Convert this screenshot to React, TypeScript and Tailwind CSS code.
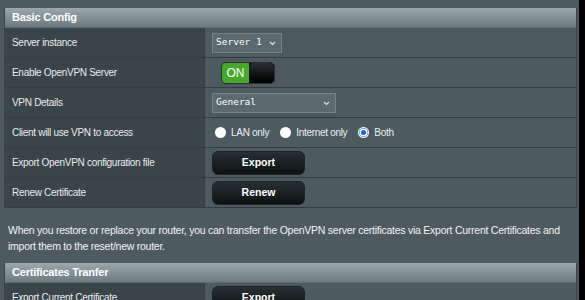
import React from "react";

const font = { fontFamily: '"Liberation Sans", Arial, sans-serif' };

function Row({ label, children }: { label: string; children?: React.ReactNode }) {
  return (
    <div className="flex h-[30px] border-b border-[#343e42]">
      <div className="w-[200px] shrink-0 bg-[#3a4549] flex items-center pl-[7px] text-[10px] tracking-[-0.3px] text-[#e8ecee] border-r border-[#343e42] whitespace-nowrap">
        {label}
      </div>
      <div className="flex-1 bg-[#4d5a60] flex items-center pl-[7px]">{children}</div>
    </div>
  );
}

function Header({ title }: { title: string }) {
  return (
    <div className="h-[20px] flex items-center pl-[7px] text-[11px] tracking-[-0.2px] font-bold text-white bg-gradient-to-b from-[#9aa8ad] to-[#6c7b81] border-b border-[#5f6d73]">
      {title}
    </div>
  );
}

function Select({ text, w }: { text: string; w: string }) {
  return (
    <div
      className={`${w} h-[20px] bg-[#5a6a70] border border-[#74838a] flex items-center justify-between pl-[3px] pr-[5px] text-white whitespace-nowrap`}
    >
      <span style={{ fontFamily: '"DejaVu Sans Mono", "Liberation Mono", monospace' }} className="text-[9.5px]">
        {text}
      </span>
      <svg width="7" height="5" viewBox="0 0 7 5" className="mt-[1px]">
        <path d="M1 1 L3.5 3.5 L6 1" stroke="#e6e6e6" strokeWidth="1.1" fill="none" />
      </svg>
    </div>
  );
}

function Btn({ text }: { text: string }) {
  return (
    <div className="w-[93px] h-[24px] rounded-[6px] bg-gradient-to-b from-[#283034] to-[#0e1213] border border-[#1c2326] flex items-center justify-center text-[10.5px] font-bold text-white">
      {text}
    </div>
  );
}

function Radio({ checked, label }: { checked?: boolean; label: string }) {
  return (
    <div className="flex items-center gap-[5px] mr-[11px]">
      {checked ? (
        <div className="w-[11px] h-[11px] rounded-full bg-white flex items-center justify-center">
          <div className="w-[9px] h-[9px] rounded-full bg-[#1565e0] flex items-center justify-center">
            <div className="w-[5px] h-[5px] rounded-full bg-[#1565e0] ring-[1.5px] ring-white" />
          </div>
        </div>
      ) : (
        <div className="w-[11px] h-[11px] rounded-full bg-white" />
      )}
      <span className="text-[10px] tracking-[-0.3px] text-[#e8ecee]">{label}</span>
    </div>
  );
}

export default function App() {
  return (
    <div className="w-[585px] h-[300px] overflow-hidden flex" style={font}>
      <div className="w-[579px] h-full bg-[#4d5b61] pt-[8px] pl-[4px] pr-[2px]">
        <div className="border-l border-r border-[#3a4449]">
          <Header title="Basic Config" />
          <Row label="Server instance">
            <Select text="Server 1" w="w-[70px]" />
          </Row>
          <Row label="Enable OpenVPN Server">
            <div className="ml-[9px] w-[54px] h-[22px] rounded-[5px] flex overflow-hidden bg-[#0a0c0d] border border-[#2a3034]">
              <div className="w-[27px] h-full bg-[#47a82b] flex items-center justify-center text-[12px] text-white">
                ON
              </div>
              <div className="flex-1 h-full rounded-[5px] bg-gradient-to-b from-[#2a2f31] to-[#020303]" />
            </div>
          </Row>
          <Row label="VPN Details">
            <Select text="General" w="w-[124px]" />
          </Row>
          <Row label="Client will use VPN to access">
            <div className="flex items-center ml-[3px]">
              <Radio label="LAN only" />
              <Radio label="Internet only" />
              <Radio checked label="Both" />
            </div>
          </Row>
          <Row label="Export OpenVPN configuration file">
            <Btn text="Export" />
          </Row>
          <Row label="Renew Certificate">
            <Btn text="Renew" />
          </Row>
        </div>
        <p className="mt-[14px] mb-[9px] pl-[4px] pr-[10px] text-[10.5px] tracking-[-0.25px] leading-[16px] text-[#f0f2f3]">
          When you restore or replace your router, you can transfer the OpenVPN server certificates via Export Current Certificates and import them to the reset/new router.
        </p>
        <div className="border-l border-r border-[#3a4449]">
          <Header title="Certificates Tranfer" />
          <Row label="Export Current Certificate">
            <Btn text="Export" />
          </Row>
        </div>
      </div>
      <div className="w-[6px] h-full bg-black" />
    </div>
  );
}
